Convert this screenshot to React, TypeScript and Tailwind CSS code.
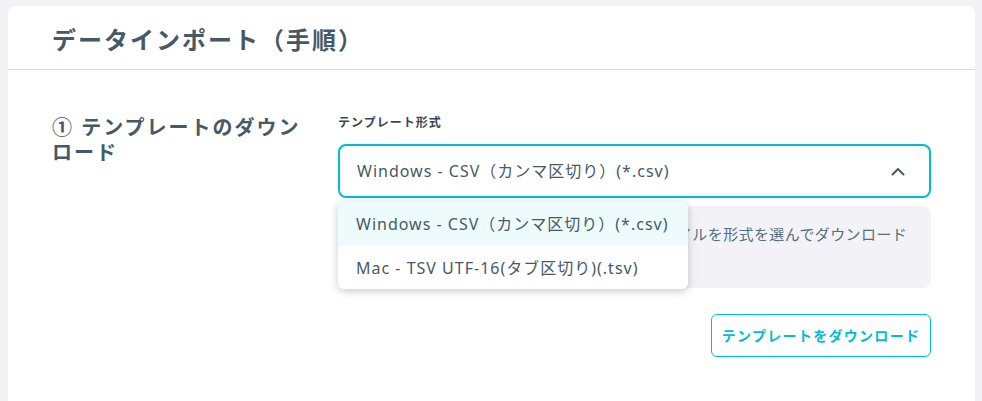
import { useState } from "react";

const options = [
  "Windows - CSV（カンマ区切り）(*.csv)",
  "Mac - TSV UTF-16(タブ区切り)(.tsv)",
];

export default function App() {
  const [selected] = useState(0);
  const [open] = useState(true);

  return (
    <div
      className="min-h-screen bg-[#f3f3f7] pt-[6px] pl-2 pr-[7px] text-[#455a64]"
      style={{ fontFamily: '"Noto Sans", "Noto Sans CJK JP", sans-serif' }}
    >
      <div className="min-h-[420px] rounded-lg bg-white">
        <div className="flex h-[64px] items-center border-b border-[#d5dadd] px-11 pt-1">
          <h1 className="text-[24px] font-bold tracking-[2px]">データインポート（手順）</h1>
        </div>

        <div className="flex gap-[30px] px-11 pt-[45px]">
          <div className="w-[256px] shrink-0">
            <h2 className="text-[20px] font-bold leading-[25px] tracking-[2px]">
              ① テンプレートのダウンロード
            </h2>
          </div>

          <div className="flex-1">
            <p className="mb-[13px] text-[12px] font-bold leading-4 tracking-[1px] text-[#37474f]">
              テンプレート形式
            </p>
            <div className="relative">
              <div className="flex h-[54px] items-center justify-between rounded-lg border-2 border-[#00bcd4] pl-[17px] pr-[24px] text-[16px] tracking-[1px]">
                <span>{options[selected]}</span>
                <svg width="14" height="9" viewBox="0 0 14 9" fill="none">
                  <polyline
                    points="1.5,7.5 7,2 12.5,7.5"
                    stroke="#455a64"
                    strokeWidth="2"
                    strokeLinecap="round"
                    strokeLinejoin="round"
                  />
                </svg>
              </div>
              {open && (
                <ul className="absolute left-0 top-full z-10 mt-[4px] w-[350px] overflow-hidden rounded-md bg-white text-[16px] tracking-[1px] shadow-[0_2px_8px_rgba(0,0,0,0.22)]">
                  {options.map((o, i) => (
                    <li
                      key={o}
                      className={
                        i === selected
                          ? "flex h-[44px] items-center bg-[#edfbfd] pl-[18px]"
                          : "flex h-[43px] items-center pl-[18px]"
                      }
                    >
                      {o}
                    </li>
                  ))}
                </ul>
              )}
            </div>
            <div className="mt-2 rounded-lg bg-[#f3f3f7] p-4 text-[15px] leading-[25px] tracking-[0.4px] text-[#546e7a]">
              データインポートするためのテンプレートファイルを形式を選んでダウンロード
              <br />
              してください。
            </div>
            <div className="mt-[26px] flex justify-end">
              <button className="h-[43px] w-[220px] rounded-md border border-[#00bcd4] text-[14px] font-bold tracking-[1.3px] text-[#00bcd4]">
                テンプレートをダウンロード
              </button>
            </div>
          </div>
        </div>
      </div>
    </div>
  );
}
